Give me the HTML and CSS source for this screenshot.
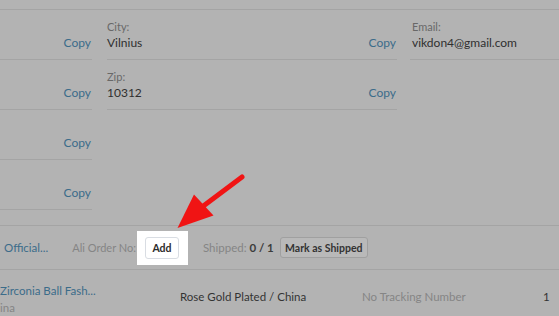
FILE: index.html
```html
<!DOCTYPE html>
<html>
<head>
<meta charset="utf-8">
<link rel="stylesheet" href="styles.css">
</head>
<body>
<div class="page">
  <div class="top-rule"></div>
  <div class="fields">
    <div class="col">
      <div class="field"><span class="label"></span><span class="value"></span><a class="copy">Copy</a></div>
      <div class="field"><span class="label"></span><span class="value"></span><a class="copy">Copy</a></div>
      <div class="field"><span class="label"></span><span class="value"></span><a class="copy">Copy</a></div>
      <div class="field"><span class="label"></span><span class="value"></span><a class="copy">Copy</a></div>
    </div>
    <div class="col">
      <div class="field"><span class="label">City:</span><span class="value">Vilnius</span><a class="copy">Copy</a></div>
      <div class="field"><span class="label">Zip:</span><span class="value">10312</span><a class="copy">Copy</a></div>
    </div>
    <div class="col">
      <div class="field wide"><span class="label">Email:</span><span class="value">vikdon4@gmail.com</span></div>
    </div>
  </div>

  <div class="order-bar">
    <a class="store">Official...</a>
    <span class="ali-label">Ali Order No:</span>
    <span class="spot"><button class="btn-add">Add</button></span>
    <span class="shipped">Shipped: <b>0 / 1</b></span>
    <button class="btn-ship">Mark as Shipped</button>
  </div>

  <div class="product-row">
    <div class="prod-name">
      <a class="prod-title">Zirconia Ball Fash...</a>
      <span class="prod-origin">ina</span>
    </div>
    <div class="prod-variant">Rose Gold Plated / China</div>
    <div class="prod-track">No Tracking Number</div>
    <div class="prod-qty">1</div>
  </div>

  <svg class="arrow" width="80" height="70" viewBox="170 170 80 70" aria-hidden="true">
    <line x1="242" y1="177" x2="202" y2="207" stroke="#f01414" stroke-width="5" stroke-linecap="round"/>
    <polygon points="177.5,228 194,194.5 213.5,215.5" fill="#f01414"/>
  </svg>
</div>
</body>
</html>
```

FILE: styles.css
```css
* { box-sizing: border-box; }

html, body {
  margin: 0;
  padding: 0;
  background: #b3b3b3;
}

body {
  font-family: Lato, "Open Sans", "Liberation Sans", sans-serif;
  color: #333;
  overflow: hidden;
}

.page {
  position: relative;
  width: 559px;
  height: 316px;
  overflow: hidden;
}

.top-rule {
  height: 10px;
  border-bottom: 1px solid #a4a4a4;
}

.fields {
  display: grid;
  grid-template-columns: 92px 290px 1fr;
  column-gap: 15px;
  height: 216px;
  border-bottom: 1px solid #a4a4a4;
}

.field {
  display: grid;
  grid-template-columns: 1fr auto;
  grid-template-rows: 15px 17px;
  padding: 9px 1px 8px 0;
  border-bottom: 1px solid #a4a4a4;
  height: 50px;
}

.field.wide { padding-right: 0; margin-left: -2px; padding-left: 2px; }

.label {
  grid-column: 1;
  grid-row: 1;
  font-size: 11px;
  line-height: 15px;
  color: #686868;
}

.value {
  grid-column: 1;
  grid-row: 2;
  font-size: 12px;
  line-height: 17px;
  color: #2f2f2f;
}

.copy {
  grid-column: 2;
  grid-row: 2;
  font-size: 12px;
  line-height: 17px;
  color: #3b6c8a;
}

.order-bar {
  display: flex;
  align-items: center;
  height: 44px;
  padding-left: 4px;
  border-bottom: 1px solid #a4a4a4;
  font-size: 11px;
}

.store {
  font-size: 11.5px;
  color: #3b6c8a;
  margin-right: 24px;
}

.ali-label {
  color: #858585;
  margin-right: 1px;
}

.spot {
  display: flex;
  background: #fff;
  padding: 6px 9px 6px 8px;
}

.btn-add {
  width: 34px;
  height: 22px;
  padding: 0;
  border: 1px solid #d9dde3;
  border-radius: 3px;
  background: #fff;
  font-family: inherit;
  font-size: 10.5px;
  font-weight: 700;
  color: #2b2b2b;
}

.shipped {
  margin-left: 15px;
  margin-right: 6px;
  font-size: 11.5px;
  color: #858585;
}

.shipped b {
  color: #3c3c3c;
}

.btn-ship {
  width: 88px;
  height: 21px;
  padding: 0;
  border: 1px solid #a0a0a0;
  border-radius: 3px;
  background: #b9b9b9;
  font-family: inherit;
  font-size: 10.5px;
  font-weight: 700;
  color: #333;
}

.product-row {
  display: flex;
  align-items: flex-start;
  padding-top: 12px;
  font-size: 11.5px;
}

.prod-name {
  display: flex;
  flex-direction: column;
  width: 180px;
  line-height: 17px;
}

.prod-title { color: #3b6c8a; }
.prod-origin { color: #858585; }

.prod-variant {
  width: 182px;
  margin-top: 8px;
  color: #333;
}

.prod-track {
  width: 181px;
  margin-top: 8px;
  color: #858585;
}

.prod-qty {
  margin-top: 8px;
  color: #333;
}

.arrow {
  position: absolute;
  left: 170px;
  top: 170px;
}
```
